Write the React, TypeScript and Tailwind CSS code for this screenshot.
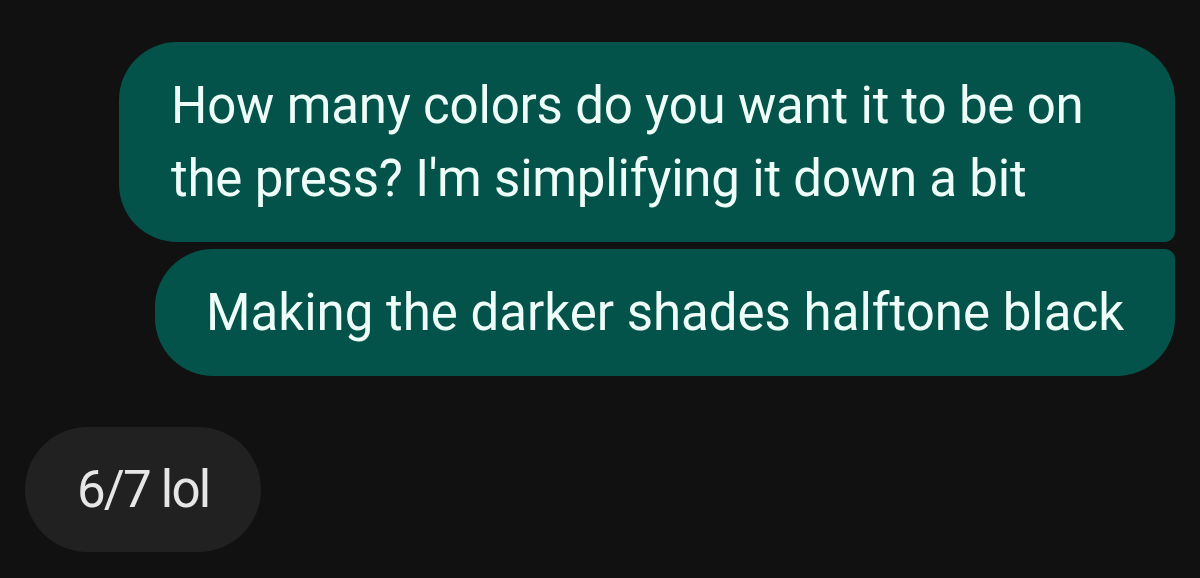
import React from "react";

const bubbleText = "font-['Roboto','Liberation_Sans',sans-serif] text-[51px] leading-[73px]";

export default function App() {
  return (
    <div className="flex h-[578px] w-[1200px] flex-col overflow-hidden bg-[#111111] px-[25px] pt-[42px]">
      <div className="flex flex-col items-end gap-[7px]">
        <div
          className={`max-w-[1056px] rounded-tl-[58px] rounded-tr-[58px] rounded-br-[10px] rounded-bl-[58px] bg-[#03534a] py-[27px] pl-[52px] pr-[40px] tracking-[-0.2px] text-[#eefdf8] ${bubbleText}`}
        >
          How many colors do you want it to be on the press? I'm simplifying it down a bit
        </div>
        <div
          className={`rounded-tl-[58px] rounded-tr-[10px] rounded-br-[58px] rounded-bl-[58px] bg-[#03534a] px-[51px] py-[27px] text-[#eefdf8] ${bubbleText}`}
        >
          Making the darker shades halftone black
        </div>
      </div>
      <div className="mt-[51px] flex">
        <div className={`rounded-full bg-[#212121] px-[52px] py-[26px] tracking-[-1.8px] text-[#e6e6e6] ${bubbleText}`}>
          6/7 lol
        </div>
      </div>
    </div>
  );
}
